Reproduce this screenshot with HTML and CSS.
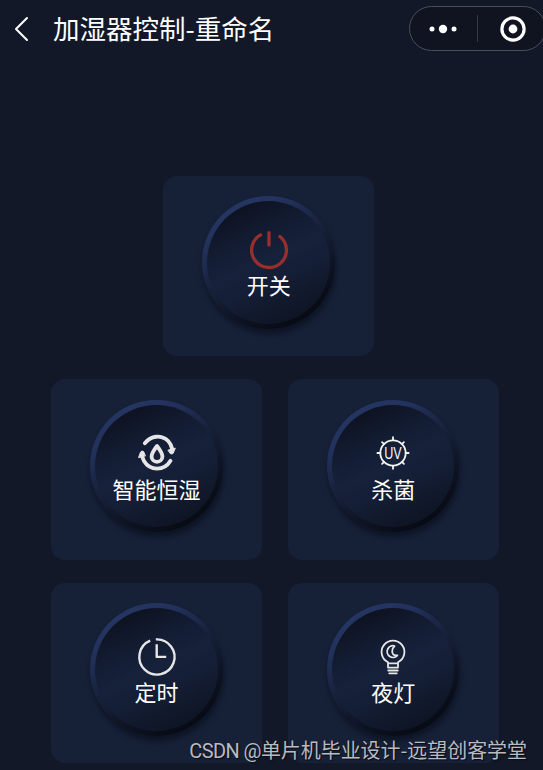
FILE: index.html
```
<!DOCTYPE html>
<html lang="zh-CN">
<head>
<meta charset="utf-8">
<title>加湿器控制</title>
<link rel="stylesheet" href="styles.css">
</head>
<body>
<div class="screen">
  <header class="navbar">
    <svg class="back" viewBox="0 0 16 28"><path d="M14 3 3 14l11 11"/></svg>
    <h1 class="title">加湿器控制-重命名</h1>
    <div class="capsule">
      <svg class="more" viewBox="0 0 28 12"><circle cx="3" cy="6" r="2.5"/><circle cx="14" cy="6" r="4.2"/><circle cx="25" cy="6" r="2.5"/></svg>
      <span class="divider"></span>
      <svg class="close" viewBox="0 0 28 28"><circle class="ring" cx="14" cy="14" r="11.1"/><circle cx="14" cy="14" r="4.4"/></svg>
    </div>
  </header>
  <main class="controls">
    <section class="card wide">
      <button class="knob">
        <svg class="icon power" viewBox="0 0 44 44"><path d="M13.6 6.9A17.4 17.4 0 1 0 32.9 8.5M22 4.6V17"/></svg>
        <span>开关</span>
      </button>
    </section>
    <section class="card">
      <button class="knob">
        <svg class="icon cycle" viewBox="0 0 44 44"><path class="arc" d="M9.8 12.3C16 4.5 26 3.5 33 9.8Q36 13 37.2 18M35.5 29.8C29 40.5 15 40 9 30L6.9 25"/><path class="solid" d="M33.3 19.1 40.3 17.1 38.2 22.3Q37 23.6 35.4 22.6ZM3.7 26.2 5.6 21Q7 19.2 8.6 20.6L10.3 24.6Z"/><path class="drop" d="M22 15Q16.6 22 16.6 25.4a5.4 5.4 0 0 0 10.8 0Q27.4 22 22 15Z"/></svg>
        <span>智能恒湿</span>
      </button>
    </section>
    <section class="card">
      <button class="knob">
        <svg class="icon uv" viewBox="0 0 44 44"><circle cx="22" cy="22" r="12.7"/><path d="M22 6.2v3M22 34.8v3M6.4 22h3M34.6 22h3M11.1 11.1l2 2M30.9 30.9l2 2M11.1 32.9l2-2M30.9 13.1l2-2"/><text x="22" y="27.8" text-anchor="middle" textLength="17.5" lengthAdjust="spacingAndGlyphs">UV</text></svg>
        <span>杀菌</span>
      </button>
    </section>
    <section class="card">
      <button class="knob">
        <svg class="icon timer" viewBox="0 0 44 44"><path d="M20.8 4.4A17.6 17.6 0 1 1 15.2 5.7M21.7 9.3v12.6h9.5"/></svg>
        <span>定时</span>
      </button>
    </section>
    <section class="card">
      <button class="knob">
        <svg class="icon bulb" viewBox="0 0 44 44"><path d="M17 32.6v-5.3A11.4 11.4 0 1 1 27 27.3V32.6ZM17.3 28.3h9.4M17.2 35.5h9.6M18.2 38.3h7.6"/><path d="M23.6 11a5.8 5.8 0 1 0 2.8 9.3q-4.9 1-5.2-3.8-.1-3.4 2.4-5.5Z"/></svg>
        <span>夜灯</span>
      </button>
    </section>
  </main>
  <div class="watermark"><span>CSDN @</span>单片机毕业设计-远望创客学堂</div>
</div>
</body>
</html>
```
FILE: styles.css
```
* { box-sizing: border-box; }
body {
  margin: 0;
  background: #121827;
  color: #fff;
  font-family: "Noto Sans CJK SC", sans-serif;
}
.screen {
  position: relative;
  width: 543px;
  height: 770px;
  overflow: hidden;
}
.navbar {
  display: flex;
  align-items: center;
  height: 57px;
  padding-left: 13px;
}
.back { width: 16px; height: 28px; flex: none; }
.back path {
  fill: none;
  stroke: #fff;
  stroke-width: 2;
  stroke-linecap: round;
  stroke-linejoin: round;
}
.title {
  margin: 0 0 1px 24px;
  font-size: 26.5px;
  line-height: 40px;
  font-weight: 400;
  white-space: nowrap;
}
.capsule {
  display: flex;
  align-items: center;
  flex: none;
  width: 137px;
  height: 45px;
  margin-left: auto;
  margin-right: -3px;
  padding-left: 19px;
  border: 1px solid #4b4e59;
  border-radius: 23px;
  background: #101320;
}
.capsule svg { fill: #fff; flex: none; }
.more { width: 28px; height: 12px; }
.divider { width: 1px; height: 27px; margin-left: 20px; background: #363944; }
.close { width: 28px; height: 28px; margin-left: 21px; }
.ring { fill: none; stroke: #fff; stroke-width: 3.2; }
.controls {
  display: grid;
  grid-template-columns: 211.2px 211.2px;
  grid-auto-rows: 180.7px;
  gap: 22.8px 25.4px;
  margin: 118.8px 0 0 51px;
}
.card {
  display: flex;
  justify-content: center;
  align-items: flex-start;
  padding-top: 20.7px;
  border-radius: 14px;
  background: #162037;
}
.wide {
  grid-column: 1 / -1;
  justify-self: center;
  width: 211.2px;
  margin-right: 12.4px;
}
.knob {
  display: flex;
  flex-direction: column;
  align-items: center;
  width: 132.5px;
  height: 132.5px;
  padding: 26.5px 0 0;
  border: 5.8px solid transparent;
  border-radius: 50%;
  background:
    linear-gradient(155deg, #0d1220 11%, #121b30 30%, #16213b 48%, #141e35 62%, #0d1321 92%) padding-box,
    linear-gradient(150deg, #263765 10%, #22315b 26%, #172039 48%, #0f1526 66%, #070b14 86%) border-box;
  box-shadow: 1px 5px 5px rgba(7, 11, 22, .55);
  color: #fff;
  font: 22px/30px "Noto Sans CJK SC", sans-serif;
  white-space: nowrap;
}
.icon {
  width: 44px;
  height: 44px;
  flex: none;
  fill: none;
  stroke: #e6e6e6;
  stroke-linecap: round;
  stroke-linejoin: round;
}
.knob span { margin-top: -2.6px; }
.power { stroke: #96302e; stroke-width: 3.3; }
.arc { stroke-width: 3.8; }
.solid { fill: #e6e6e6; stroke-width: 1; }
.drop { stroke-width: 3.8; }
.uv { stroke: #f4f4f4; stroke-width: 1.8; }
.uv text {
  fill: #f4f4f4;
  stroke: none;
  font: 16px "Liberation Sans", sans-serif;
}
.timer { stroke-width: 2.4; stroke-linecap: butt; }
.bulb { stroke-width: 1.8; }
.watermark {
  position: absolute;
  right: 16px;
  bottom: 4px;
  font-size: 19.95px;
  line-height: 30px;
  color: #b9bbc0;
  white-space: nowrap;
  text-shadow: 1px 1px 1px #080b12;
}
.watermark span {
  font-family: Roboto, sans-serif;
  letter-spacing: -.55px;
}
```
